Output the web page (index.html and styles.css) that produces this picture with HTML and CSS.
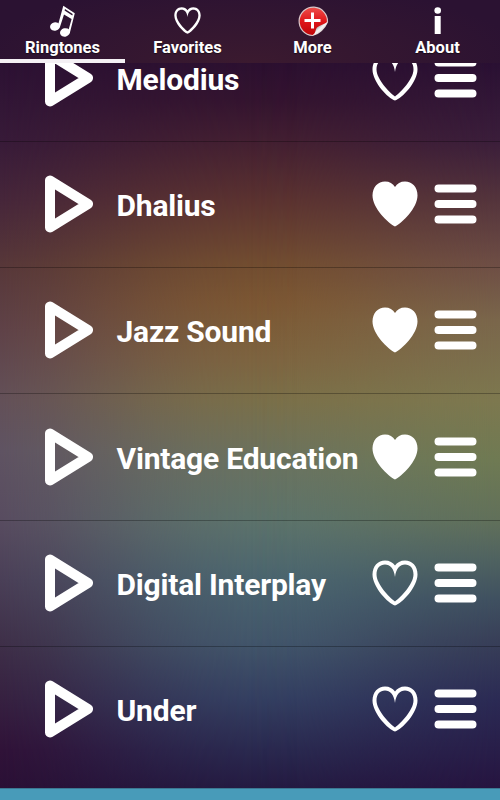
FILE: index.html
```
<!DOCTYPE html>
<html lang="en">
<head>
<meta charset="utf-8">
<title>Ringtones</title>
<link rel="stylesheet" href="styles.css">
</head>
<body>
<svg class="defs" width="0" height="0" aria-hidden="true">
  <symbol id="play" viewBox="0 0 48 58"><path d="M5 5.500V52.500L43 29Z" fill="none" stroke="#fff" stroke-width="10" stroke-linejoin="round"/></symbol>
  <symbol id="heart" viewBox="0 0 46 46"><path fill-rule="evenodd" d="M23 45.500C16 43.500 .5 27 .5 14.500C.5 6 6 .5 13 .5C17.500 .5 21 2.500 23 5.500C25 2.500 28.500 .5 33 .5C40 .5 45.500 6 45.500 14.500C45.500 27 30 43.500 23 45.500ZM23 41.500C29 37 41.500 24 41.500 14.500C41.500 8 38 4.500 33 4.500C28 4.500 24 8.500 23 17C22 8.500 18 4.500 13 4.500C8 4.500 4.500 8 4.500 14.500C4.500 24 17 37 23 41.500Z" fill="#fff"/></symbol>
  <symbol id="heart-full" viewBox="0 0 46 46"><path d="M23 45.500C16 42 .5 27 .5 14.500C.5 6 6 .5 13 .5C17.500 .5 21 2.500 23 6C25 2.500 28.500 .5 33 .5C40 .5 45.500 6 45.500 14.500C45.500 27 30 42 23 45.500Z" fill="#fff"/></symbol>
  <symbol id="menu" viewBox="0 0 43 40"><path d="M4.500 4.500H38.500M4.500 20H38.500M4.500 35.500H38.500" stroke="#fff" stroke-width="8" stroke-linecap="round"/></symbol>
</svg>
<div class="app">
  <nav class="tabs">
    <div class="tab active">
      <svg class="tab-icon" viewBox="0 0 32 32"><g fill="#fff"><ellipse cx="8" cy="21.500" rx="5" ry="4.200" transform="rotate(-15 8 21.500)"/><ellipse cx="18" cy="27.400" rx="5" ry="4.200" transform="rotate(-15 18 27.400)"/><path d="M16.300 .8L27.800 8.200L22.800 28L20.800 27.500L24.600 14L17 9.500L12.800 22.500L10.600 21.500ZM18 4L17.600 5.600L25.300 10.400L25.700 8.900Z" fill-rule="evenodd"/></g></svg>
      <span>Ringtones</span>
    </div>
    <div class="tab">
      <svg class="tab-icon heart-icon" viewBox="0 0 46 46"><use href="#heart"/></svg>
      <span>Favorites</span>
    </div>
    <div class="tab">
      <svg class="tab-icon" viewBox="0 0 32 32">
        <defs>
          <linearGradient id="red" x2="0" y2="1"><stop offset="0" stop-color="#ee4f4b"/><stop offset=".5" stop-color="#df1719"/><stop offset="1" stop-color="#bd0508"/></linearGradient>
          <linearGradient id="curl" x1="0" y1="0" x2="1" y2="1"><stop offset=".2" stop-color="#777"/><stop offset=".5" stop-color="#f5f5f5"/><stop offset="1" stop-color="#aaa"/></linearGradient>
        </defs>
        <path d="M15.500 30.500A14.200 14.200 0 1 1 30.500 17C28 23 22 29 15.500 30.500Z" fill="url(#red)" stroke="#d9c8ca" stroke-width="1.200"/>
        <path d="M15.500 30.500C19 28 18 25 20 22.500C23 20 27 19.500 30.500 17C28 23 22 29 15.500 30.500Z" fill="url(#curl)"/>
        <path d="M7.500 15.500H23.500M15.500 7.500V23.500" stroke="#fff" stroke-width="3"/>
      </svg>
      <span>More</span>
    </div>
    <div class="tab">
      <svg class="tab-icon" viewBox="0 0 32 32"><circle cx="15.700" cy="5.500" r="3.300" fill="#fff"/><path d="M12.700 11H18.700V29H12.700Z" fill="#fff"/></svg>
      <span>About</span>
    </div>
  </nav>
  <main class="list">
    <div class="row"><svg class="play"><use href="#play"/></svg><span class="name">Melodius</span><svg class="heart"><use href="#heart"/></svg><svg class="menu"><use href="#menu"/></svg></div>
    <div class="row"><svg class="play"><use href="#play"/></svg><span class="name">Dhalius</span><svg class="heart"><use href="#heart-full"/></svg><svg class="menu"><use href="#menu"/></svg></div>
    <div class="row"><svg class="play"><use href="#play"/></svg><span class="name">Jazz Sound</span><svg class="heart"><use href="#heart-full"/></svg><svg class="menu"><use href="#menu"/></svg></div>
    <div class="row"><svg class="play"><use href="#play"/></svg><span class="name">Vintage Education</span><svg class="heart"><use href="#heart-full"/></svg><svg class="menu"><use href="#menu"/></svg></div>
    <div class="row"><svg class="play"><use href="#play"/></svg><span class="name">Digital Interplay</span><svg class="heart"><use href="#heart"/></svg><svg class="menu"><use href="#menu"/></svg></div>
    <div class="row"><svg class="play"><use href="#play"/></svg><span class="name">Under</span><svg class="heart"><use href="#heart"/></svg><svg class="menu"><use href="#menu"/></svg></div>
  </main>
  <footer class="banner"></footer>
</div>
</body>
</html>
```
FILE: styles.css
```
* { box-sizing: border-box; }
body { margin: 0; font-family: Roboto, "Liberation Sans", sans-serif; color: #fff; }
.defs { position: absolute; }
.app { width: 500px; height: 800px; display: flex; flex-direction: column; overflow: hidden; background: #2e1232; }
.tabs {
  height: 63px; flex: none; display: grid; grid-template-columns: repeat(4, 1fr);
  background: radial-gradient(ellipse 280px 80px at 50% 100%, #3b1a2f, rgba(59, 26, 47, 0)), #2b1232;
}
.tab { display: flex; flex-direction: column; align-items: center; padding-top: 5px; font-size: 16.500px; font-weight: 700; line-height: 22px; border-bottom: 4px solid transparent; }
.tab.active { border-bottom-color: #f4f0f4; }
.tab-icon { width: 32px; height: 32px; flex: none; }
.heart-icon { width: 27px; height: 27px; margin: 2px 0 3px; }
.tab span { text-shadow: 0 1px 1px rgba(0, 0, 0, .5); }
.list {
  position: relative; isolation: isolate; height: 725px; flex: none; overflow: hidden;
  background: linear-gradient(#2c1030 0, #34142f 37px, #431f31 77px, #5c3330 137px, #734e30 202px, #7d5833 240px, #7e6540 297px, #7b7049 337px, #6b7360 397px, #5d746c 457px, #4b6670 517px, #43586c 577px, #344062 637px, #2a2a50 687px, #241b42 726px);
}
.list::before, .list::after { content: ""; position: absolute; inset: 0; z-index: -1; }
.list::before {
  background: linear-gradient(#2c1133 0, #371a38 77px, #46263a 137px, #573739 202px, #5f4248 267px, #635058 337px, #5f5362 387px, #584c60 457px, #4a3f57 517px, #3f3049 577px, #362040 637px, #301238 687px, #2a1035 726px);
  mask-image: linear-gradient(90deg, #000, rgba(0, 0, 0, .82) 10%, rgba(0, 0, 0, .56) 20%, rgba(0, 0, 0, .32) 30%, rgba(0, 0, 0, .14) 40%, rgba(0, 0, 0, .04) 50%, transparent 60%);
}
.list::after {
  background: linear-gradient(#2a1033 0, #3a1d3a 77px, #54343c 137px, #6e4e45 202px, #7a664b 257px, #7d784f 337px, #6f7a53 397px, #61705a 457px, #4f6260 497px, #3f5060 537px, #383f58 577px, #2b2a54 637px, #261440 726px);
  mask-image: linear-gradient(90deg, transparent 50%, rgba(0, 0, 0, .08) 58%, rgba(0, 0, 0, .26) 67%, rgba(0, 0, 0, .5) 76%, rgba(0, 0, 0, .77) 87%, #000);
}
.row {
  height: 126.300px; display: flex; align-items: center; padding: 0 23.500px 1px 45px;
  border-bottom: 1px solid rgba(0, 0, 0, .28);
}
.row:first-child { margin-top: -47.500px; }
.row:last-child { border-bottom-color: transparent; }
.play { width: 48px; height: 58px; margin-right: 23.500px; flex: none; }
.name { flex: 1; font-size: 30px; font-weight: 700; letter-spacing: -.2px; white-space: nowrap; padding-top: 3px; }
.heart { width: 46px; height: 46px; margin-right: 15.500px; flex: none; }
.menu { width: 43px; height: 40px; flex: none; }
.banner { flex: 1; background: #489bb9; border-top: 1px solid #3b7892; }
```
